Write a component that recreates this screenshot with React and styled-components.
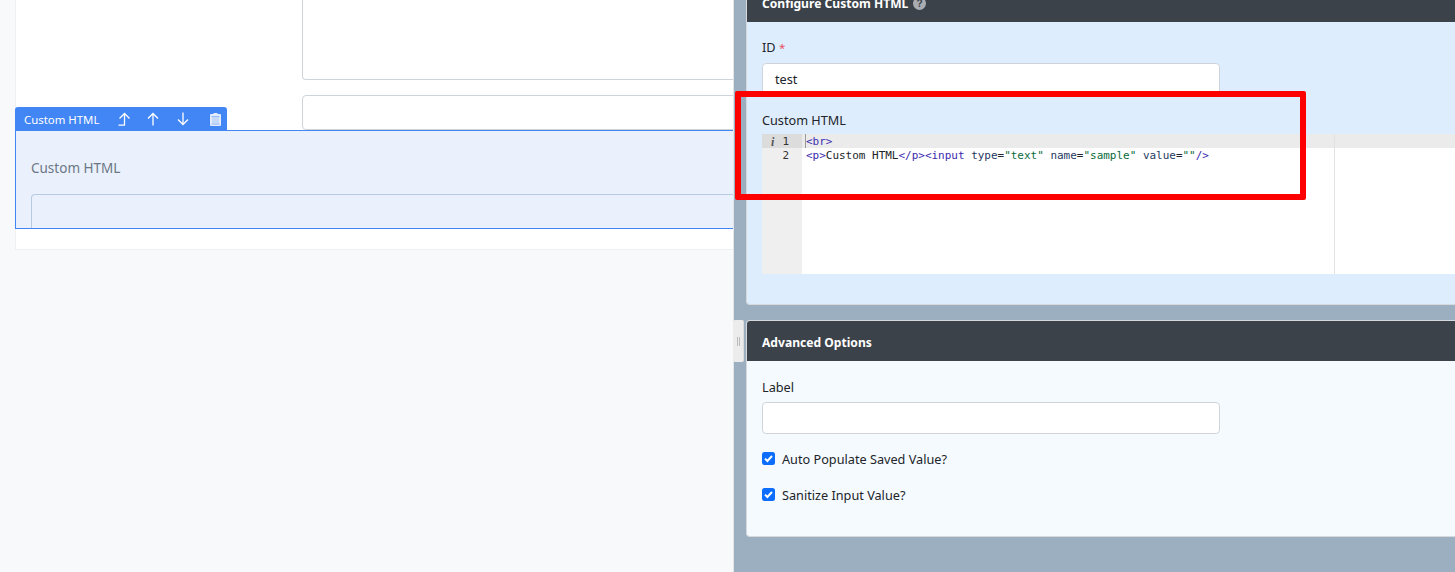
import React from "react";
import styled, { createGlobalStyle } from "styled-components";

const GlobalStyle = createGlobalStyle`
  html, body {
    margin: 0;
    padding: 0;
    height: 572px;
    overflow: hidden;
    font-family: "Noto Sans", "Open Sans", "Liberation Sans", sans-serif;
    color: #212529;
  }
  * {
    box-sizing: border-box;
  }
`;

const Page = styled.div`
  position: relative;
  display: flex;
  width: 1455px;
  height: 572px;
  overflow: hidden;
`;

// left side, the form canvas
const Canvas = styled.div`
  flex: 0 0 733px;
  height: 572px;
  padding-left: 15px;
  background: #f8f9fb;
  overflow: hidden;
`;

const Sheet = styled.div`
  width: 760px;
  height: 250px;
  background: #fff;
  border: 1px solid #eef0f2;
  border-top: 0;
`;

const PreviewArea = styled.div`
  width: 480px;
  height: 80px;
  margin-left: 286px;
  background: #fff;
  border: 1px solid #ced4da;
  border-top: 0;
  border-radius: 0 0 4px 4px;
`;

const PreviewInput = styled.div`
  width: 480px;
  height: 35px;
  margin: 15px 0 0 286px;
  background: #fff;
  border: 1px solid #ced4da;
  border-radius: 4px;
`;

const Block = styled.div`
  position: relative;
  height: 99px;
  margin-left: -1px;
  padding: 27px 15px 0;
  background: #eaf1fc;
  border: 1px solid #4285f4;
`;

const BlockTab = styled.div`
  position: absolute;
  left: -1px;
  top: -24px;
  display: flex;
  align-items: center;
  width: 212px;
  height: 24px;
  padding-left: 9px;
  background: #4285f4;
  border-radius: 3px 3px 0 0;
  color: #fff;
  font-size: 11.4px;
`;

const TabLabel = styled.span`
  flex: none;
  width: 85px;
`;

const TabIcon = styled.span`
  flex: none;
  display: flex;
  justify-content: center;
  width: 29.5px;
  margin-left: ${(p) => p.$shift || 0}px;
`;

const BlockLabel = styled.div`
  color: #6b7785;
  font-size: 13.5px;
  line-height: 20px;
`;

const BlockInput = styled.div`
  height: 34px;
  margin-top: 16px;
  border: 1px solid #b9c9df;
  border-bottom: 0;
  border-radius: 4px 4px 0 0;
`;

// right side, the settings panel
const Settings = styled.div`
  flex: 1;
  height: 572px;
  padding-left: 12px;
  background: #9bafc0;
  border-left: 1px solid #e3e6e9;
  overflow: hidden;
`;

const Card = styled.section`
  width: 760px;
  margin-top: ${(p) => p.$top}px;
  height: ${(p) => p.$height}px;
  background: ${(p) => p.$tint};
  border: 1px solid #d5d9dd;
  border-right: 0;
  border-radius: 4px 0 0 4px;
  overflow: hidden;
`;

const CardHead = styled.header`
  display: flex;
  align-items: center;
  gap: 5px;
  height: 40px;
  padding: 2px 0 0 15px;
  background: #3b4249;
  color: #fff;
  font-size: 12.1px;
  font-weight: 700;
`;

const CardBody = styled.div`
  padding: ${(p) => p.$top}px 15px 0;
`;

const FieldLabel = styled.div`
  font-size: 12.7px;
  line-height: 20px;
  margin-bottom: 5px;
`;

const Star = styled.span`
  color: #e8505f;
  font-size: 11.5px;
`;

const TextInput = styled.div`
  width: 458px;
  height: 32px;
  padding-left: 12px;
  background: #fff;
  border: 1px solid #ced4da;
  border-radius: 4px;
  font-size: 12.7px;
  line-height: 30px;
`;

const EditorLabel = styled(FieldLabel)`
  margin-top: 15px;
  margin-bottom: 4px;
`;

const Editor = styled.div`
  position: relative;
  display: flex;
  width: 700px;
  height: 140px;
  background: #fff;
  font-family: "DejaVu Sans Mono", "Liberation Mono", monospace;
  font-size: 10.98px;
  line-height: 16px;
`;

const Gutter = styled.div`
  flex: 0 0 40px;
  background: #efefef;
  color: #333;
`;

const GutterRow = styled.div`
  display: flex;
  justify-content: flex-end;
  height: 14px;
  padding-right: 13px;
  background: ${(p) => (p.$active ? "#dcdcdc" : "transparent")};
`;

const InfoMark = styled.span`
  margin-right: 8px;
  font-family: "Liberation Serif", serif;
  font-size: 12px;
  font-style: italic;
  font-weight: 700;
  color: #555;
`;

const Code = styled.div`
  position: relative;
  flex: 1;
  white-space: pre;
`;

const CodeRow = styled.div`
  height: 14px;
  padding-left: 4px;
  background: ${(p) => (p.$active ? "#ebebeb" : "transparent")};
`;

const Caret = styled.i`
  position: absolute;
  left: 3px;
  top: 0;
  width: 1px;
  height: 14px;
  background: #9a9a9a;
`;

const Tag = styled.span`
  color: #3a2bb0;
`;

const Attr = styled.span`
  color: #1f3a5f;
`;

const Str = styled.span`
  color: #0b6b3a;
`;

const PrintMargin = styled.div`
  position: absolute;
  left: 572px;
  top: 0;
  bottom: 0;
  width: 1px;
  background: #e2e2e2;
`;

const CheckRow = styled.label`
  display: flex;
  align-items: center;
  gap: 7px;
  height: 20px;
  margin-top: ${(p) => p.$gap}px;
  font-size: 12.7px;
`;

const CheckBox = styled.span`
  display: flex;
  align-items: center;
  justify-content: center;
  width: 13px;
  height: 13px;
  margin-top: -2px;
  background: #0d6efd;
  border-radius: 2.5px;
`;

const Handle = styled.div`
  position: absolute;
  left: 733px;
  top: 320px;
  display: flex;
  align-items: center;
  justify-content: center;
  gap: 1px;
  width: 11px;
  height: 42px;
  background: #ececec;
  border-right: 1px solid #dcdcdc;
  border-radius: 2px;
`;

const Grip = styled.i`
  width: 1px;
  height: 9px;
  background: #bbb;
`;

// the red box somebody drew over the screenshot
const Annotation = styled.div`
  position: absolute;
  left: 735px;
  top: 91px;
  width: 571px;
  height: 109px;
  border: 6px solid #ff0000;
  border-radius: 2px;
`;

const CornerUp = () => (
  <svg width="12" height="14" viewBox="0 0 12 14" fill="none" stroke="#fff" strokeWidth="1.3">
    <path d="M6.5 13V1.5M1.5 6.5l5-5 5 5M0.5 13.2h6.5" />
  </svg>
);

const ArrowUp = () => (
  <svg width="12" height="14" viewBox="0 0 12 14" fill="none" stroke="#fff" strokeWidth="1.3">
    <path d="M6 13.5V1.5M1 6.5l5-5 5 5" />
  </svg>
);

const ArrowDown = () => (
  <svg width="12" height="14" viewBox="0 0 12 14" fill="none" stroke="#fff" strokeWidth="1.3">
    <path d="M6 0.5v12M1 7.5l5 5 5-5" />
  </svg>
);

const Trash = () => (
  <svg width="11" height="13" viewBox="0 0 11 13">
    <path d="M3.5 0h4v1H10a1 1 0 0 1 1 1v10a1 1 0 0 1-1 1H1a1 1 0 0 1-1-1V2a1 1 0 0 1 1-1h2.5z" fill="#e3ecfd" />
    <path d="M1.5 3.2h8v1h-8zM1.5 10.5h8v1h-8z" fill="#7fa9f6" />
    <path d="M2 4.2h7v6.3H2z" fill="#c6d9fb" />
  </svg>
);

const HelpDot = () => (
  <svg width="13" height="13" viewBox="0 0 13 13">
    <circle cx="6.5" cy="6.5" r="6.5" fill="#a9adb1" />
    <text x="6.5" y="10" textAnchor="middle" fontSize="10" fontWeight="700" fill="#3b4249" fontFamily="Liberation Sans">?</text>
  </svg>
);

const Tick = () => (
  <svg width="11" height="11" viewBox="0 0 11 11" fill="none" stroke="#fff" strokeWidth="2">
    <path d="M2 5.6l2.4 2.4L9 3" />
  </svg>
);

const App = () => (
  <>
    <GlobalStyle />
    <Page>
      <Canvas>
        <Sheet>
          <PreviewArea />
          <PreviewInput />
          <Block>
            <BlockTab>
              <TabLabel>Custom HTML</TabLabel>
              <TabIcon><CornerUp /></TabIcon>
              <TabIcon><ArrowUp /></TabIcon>
              <TabIcon><ArrowDown /></TabIcon>
              <TabIcon $shift={3}><Trash /></TabIcon>
            </BlockTab>
            <BlockLabel>Custom HTML</BlockLabel>
            <BlockInput />
          </Block>
        </Sheet>
      </Canvas>
      <Settings>
        <Card $top={-19} $height={324} $tint="#deedfd">
          <CardHead>
            Configure Custom HTML <HelpDot />
          </CardHead>
          <CardBody $top={15}>
            <FieldLabel>
              ID <Star>*</Star>
            </FieldLabel>
            <TextInput>test</TextInput>
            <EditorLabel>Custom HTML</EditorLabel>
            <Editor>
              <Gutter>
                <GutterRow $active>
                  <InfoMark>i</InfoMark>1
                </GutterRow>
                <GutterRow>2</GutterRow>
              </Gutter>
              <Code>
                <CodeRow $active>
                  <Tag>&lt;br&gt;</Tag>
                </CodeRow>
                <CodeRow>
                  <Tag>&lt;p&gt;</Tag>Custom HTML<Tag>&lt;/p&gt;&lt;input</Tag> <Attr>type</Attr>=<Str>"text"</Str>{" "}
                  <Attr>name</Attr>=<Str>"sample"</Str> <Attr>value</Attr>=<Str>""</Str>
                  <Tag>/&gt;</Tag>
                </CodeRow>
                <Caret />
              </Code>
              <PrintMargin />
            </Editor>
          </CardBody>
        </Card>
        <Card $top={15} $height={217} $tint="#f5faff">
          <CardHead>Advanced Options</CardHead>
          <CardBody $top={16}>
            <FieldLabel>Label</FieldLabel>
            <TextInput />
            <CheckRow $gap={15}>
              <CheckBox><Tick /></CheckBox>
              Auto Populate Saved Value?
            </CheckRow>
            <CheckRow $gap={16}>
              <CheckBox><Tick /></CheckBox>
              Sanitize Input Value?
            </CheckRow>
          </CardBody>
        </Card>
      </Settings>
      <Handle>
        <Grip />
        <Grip />
      </Handle>
      <Annotation />
    </Page>
  </>
);

export default App;
